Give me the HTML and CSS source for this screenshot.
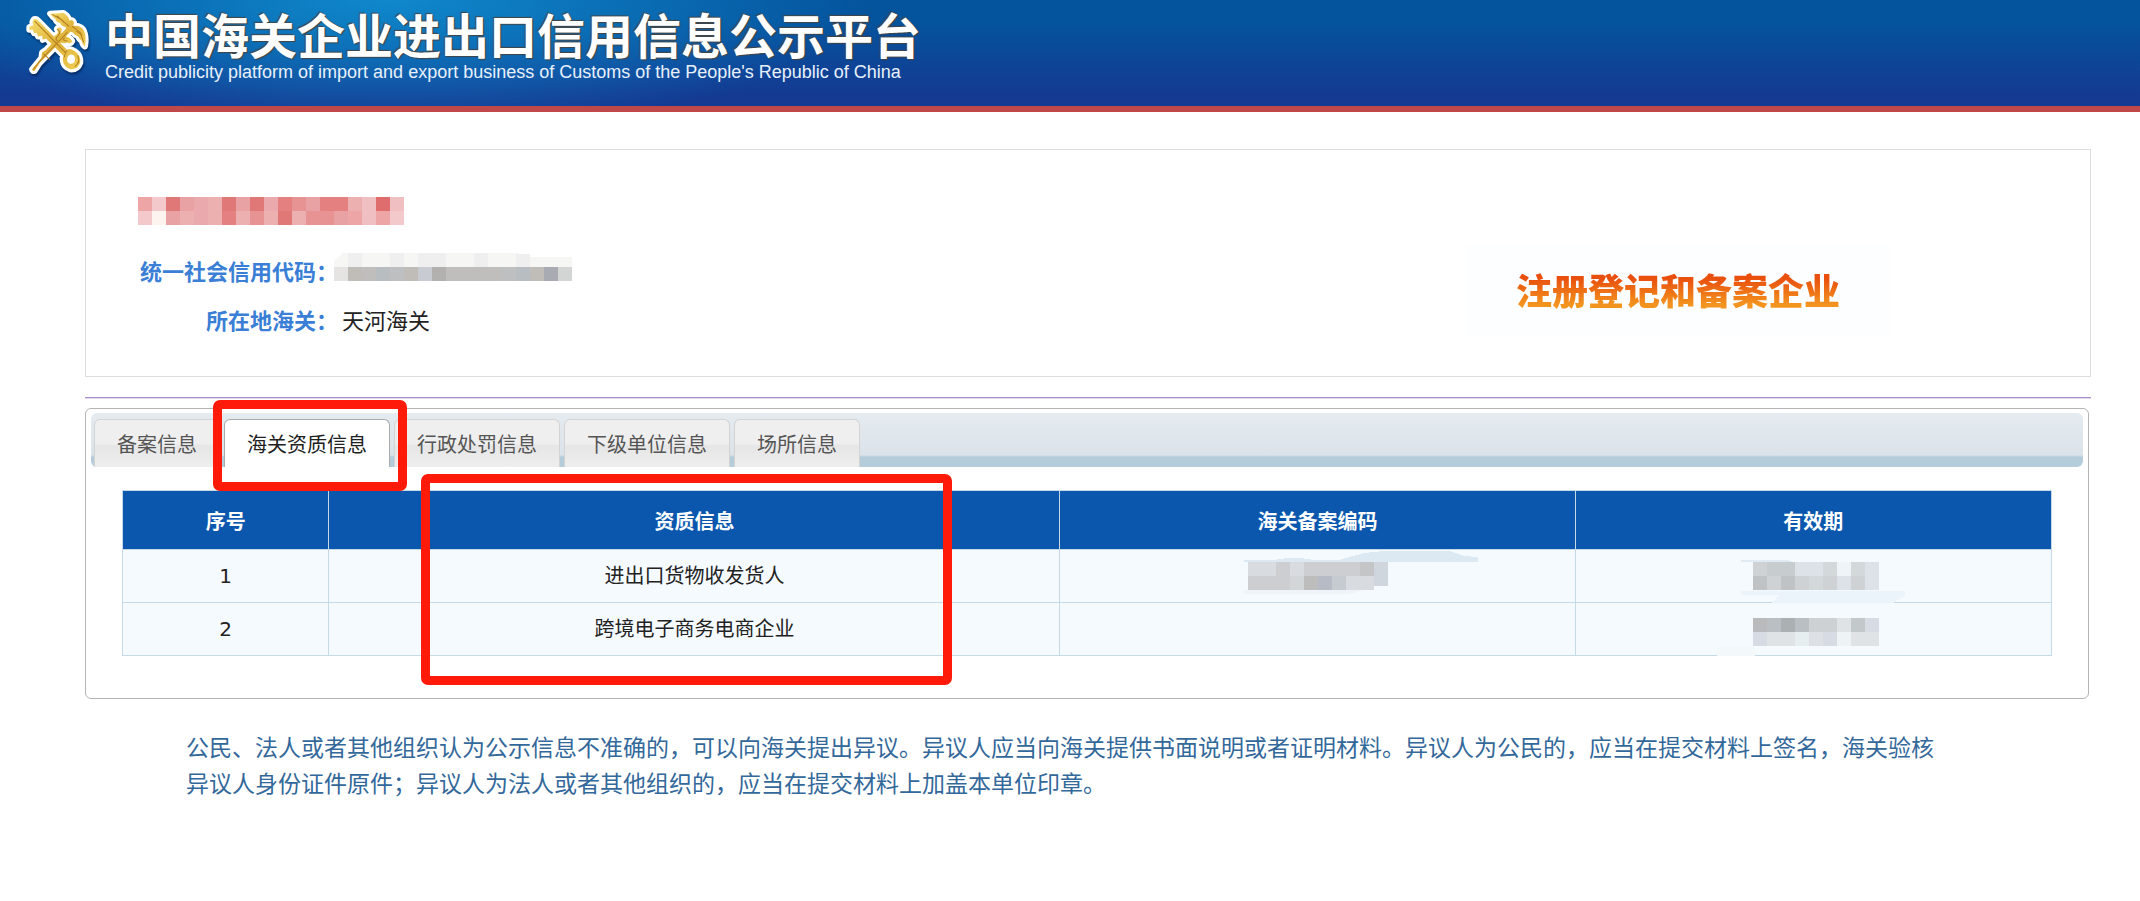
FILE: index.html
```html
<!DOCTYPE html>
<html lang="zh-CN">
<head>
    <meta charset="UTF-8">
    <meta name="viewport" content="width=device-width, initial-scale=1.0">
    <title>中国海关企业进出口信用信息公示平台</title>
    <link rel="stylesheet" href="styles.css">
</head>
<body>

<header class="header">
    <svg class="logo" viewBox="40 30 200 200" aria-hidden="true">
        <defs>
            <linearGradient id="gold" x1="0" y1="0" x2="1" y2="1">
                <stop offset="0" stop-color="#f6dc6c"/>
                <stop offset="0.5" stop-color="#e0b23a"/>
                <stop offset="1" stop-color="#f0cd52"/>
            </linearGradient>
            <g id="emblem">
                <path d="M118 44L158 42Q174 52 176 66Q180 60 187 66Q192 72 187 80Q206 78 216 90Q228 110 222 142Q214 136 212 124Q204 120 202 112Q192 108 186 100Q176 98 172 92Q166 94 164 84Q152 82 148 72Q136 70 134 60Q126 56 118 44Z"/>
                <path d="M170 84L182 94L86 192L72 214Q66 218 64 210L92 176L94 160L106 152Z"/>
                <path d="M70 60Q78 58 84 66L168 152Q176 146 192 156Q210 168 208 190Q200 212 178 210Q158 202 156 184Q154 176 158 170L106 118L96 122L94 110L82 112L78 102L70 102L66 92L56 92L56 84L68 78Q62 68 70 60ZM174 168Q166 176 170 188Q178 198 190 190Q196 178 188 168Q180 164 174 168Z" fill-rule="evenodd"/>
                <path d="M138 90Q142 82 150 86Q156 92 150 100Q158 106 166 112Q178 116 184 126Q180 136 170 130Q160 134 150 130Q142 140 130 126Q124 112 134 108Q146 102 138 90Z"/>
            </g>
        </defs>
        <use href="#emblem" fill="#fff" stroke="#fff" stroke-width="18" stroke-linejoin="round"/>
        <use href="#emblem" fill="url(#gold)"/>
        <g class="logo-lines">
            <path d="M72 66L164 160M124 46L152 62L174 82M184 82L208 100L218 130M196 96L214 108M138 50L160 70M68 210L92 180L170 100M98 164L118 182"/>
            <path d="M138 90Q152 96 142 110Q130 118 140 126M162 116Q150 124 170 126M168 154Q162 162 160 174M200 168Q210 188 192 202"/>
        </g>
        <path d="M176 170Q168 178 174 188Q180 194 188 188Q194 178 186 170Q180 166 176 170Z" fill="#fff"/>
    </svg>
    <div class="brand">
        <h1 class="brand-name">中国海关企业进出口信用信息公示平台</h1>
        <p class="brand-sub">Credit publicity platform of import and export business of Customs of the People's Republic of China</p>
    </div>
</header>

<main class="content">
    <section class="company">
        <div class="company-info">
            <svg class="mosaic company-name" width="266" height="28" viewBox="0 0 19 2" role="img" aria-label="企业名称">
                <path fill="#eea5a5" d="M0 0h1v1h-1zM17 1h1v1h-1zM15 1h1v1h-1z"/>
                <path fill="#f3c9cb" d="M1 0h1v1h-1zM0 1h1v1h-1zM18 1h1v1h-1z"/>
                <path fill="#fdf4f0" d="M1 1h1v1h-1z"/>
                <path fill="#e07878" d="M2 0h1v1h-1zM6 0h1v1h-1zM8 0h1v1h-1zM10 1h1v1h-1z"/>
                <path fill="#e9a2a3" d="M3 0h1v1h-1zM7 0h1v1h-1zM2 1h1v1h-1zM12 0h1v1h-1zM14 1h1v1h-1z"/>
                <path fill="#eaa9ac" d="M4 0h1v1h-1zM9 0h1v1h-1zM4 1h1v1h-1z"/>
                <path fill="#edb0b0" d="M5 0h1v1h-1zM3 1h1v1h-1zM5 1h1v1h-1zM7 1h1v1h-1zM9 1h1v1h-1zM11 1h1v1h-1zM15 0h1v1h-1z"/>
                <path fill="#e48080" d="M6 1h1v1h-1zM10 0h1v1h-1zM13 0h1v1h-1zM14 0h1v1h-1z"/>
                <path fill="#e89393" d="M8 1h1v1h-1zM11 0h1v1h-1zM12 1h1v1h-1zM13 1h1v1h-1z"/>
                <path fill="#efbfc2" d="M16 0h1v2h-1zM18 0h1v1h-1z"/>
                <path fill="#e06d6d" d="M17 0h1v1h-1z"/>
            </svg>
            <dl class="company-list">
                <dt>统一社会信用代码：</dt>
                <dd>
                    <svg class="mosaic credit-code" width="238" height="28" viewBox="0 0 17 2" role="img" aria-label="统一社会信用代码">
                        <path fill="#f6f6f5" d="M0 1L0 .6L.6 0H13L14 .3H17V1z"/>
                        <path fill="#efefef" d="M1 0h1v1h-1zM4 0h1v1h-1zM6 0h2v1h-2zM10 0h1v1h-1zM13 .1h1v.9h-1z"/>
                        <path fill="#e5e4e3" d="M0 1h1v1h-1z"/>
                        <path fill="#c0bcb8" d="M1 1h1v1h-1zM5 1h1v1h-1zM14 1h1v1h-1z"/>
                        <path fill="#bfbebd" d="M2 1h1v1h-1zM8 1h4v1h-4z"/>
                        <path fill="#b8bdc1" d="M3 1h1v1h-1zM13 1h1v1h-1z"/>
                        <path fill="#bdbfc1" d="M4 1h1v1h-1zM12 1h1v1h-1z"/>
                        <path fill="#c8ccd2" d="M6 1h1v1h-1z"/>
                        <path fill="#b2b1b0" d="M7 1h1v1h-1z"/>
                        <path fill="#a8acb2" d="M15 1h1v1h-1z"/>
                        <path fill="#d3d5d4" d="M16 1h1v1h-1z"/>
                    </svg>
                </dd>
                <dt>所在地海关：</dt>
                <dd>天河海关</dd>
            </dl>
        </div>
        <div class="company-type"><span>注册登记和备案企业</span></div>
    </section>

    <hr class="divider">

    <section class="tabs">
        <div class="tab-bar" role="tablist">
            <button class="tab" type="button" role="tab">备案信息</button>
            <button class="tab active" type="button" role="tab" aria-selected="true">海关资质信息<span class="mark mark-tab"></span></button>
            <button class="tab" type="button" role="tab">行政处罚信息</button>
            <button class="tab" type="button" role="tab">下级单位信息</button>
            <button class="tab" type="button" role="tab">场所信息</button>
        </div>
        <div class="tab-panel" role="tabpanel">
            <table class="info-table">
                <colgroup>
                    <col class="col-no">
                    <col class="col-info">
                    <col class="col-code">
                    <col class="col-date">
                </colgroup>
                <thead>
                    <tr>
                        <th>序号</th>
                        <th>资质信息</th>
                        <th>海关备案编码</th>
                        <th>有效期</th>
                    </tr>
                </thead>
                <tbody>
                    <tr>
                        <td>1</td>
                        <td>进出口货物收发货人</td>
                        <td>
                            <svg class="mosaic" width="146" height="48" viewBox="0 4 146 48" role="img" aria-label="海关备案编码">
                                <path fill="#dce8f2" d="M0 12H30Q50 8 70 12H95L120 5L140 3H205L220 8L234 9V14H0z"/>
                                <path fill="#eef4f9" d="M0 42H120L105 46H0z"/>
                                <path fill="#d8dce0" d="M4 14h28v14h-28zM46 14h14v14h-14zM102 28h28v14h-28z"/>
                                <path fill="#ccced2" d="M32 14h14v14h-14zM4 28h42v14h-42zM60 14h42v14h-42zM102 14h14v14h-14z"/>
                                <path fill="#d3d6d9" d="M46 28h14v14h-14z"/>
                                <path fill="#bdbdbe" d="M60 28h14v14h-14z"/>
                                <path fill="#b6bbc5" d="M74 28h14v14h-14z"/>
                                <path fill="#c6cad1" d="M88 28h14v14h-14z"/>
                                <path fill="#c3c5c6" d="M116 14h14v14h-14z"/>
                                <path fill="#cfd6de" d="M130 14h14v24h-14z"/>
                            </svg>
                        </td>
                        <td>
                            <svg class="mosaic" width="160" height="48" viewBox="0 2 160 48" role="img" aria-label="有效期">
                                <path fill="#dfeaf3" d="M8 10H54L60 12H8z"/>
                                <path fill="#ecf4fb" d="M8 41H172V46L160 53H38L46 45H8z"/>
                                <path fill="#ced2d5" d="M20 12h14v14h-14zM34 26h14v14h-14zM62 26h14v14h-14zM90 26h14v14h-14zM118 26h14v14h-14z"/>
                                <path fill="#c7cccf" d="M34 12h28v14h-28z"/>
                                <path fill="#dde2e9" d="M62 12h28v14h-28zM104 26h14v14h-14zM132 12h14v28h-14z"/>
                                <path fill="#d3d8db" d="M90 12h14v14h-14zM118 12h14v14h-14zM76 26h14v14h-14z"/>
                                <path fill="#eef4f8" d="M104 12h14v14h-14z"/>
                                <path fill="#bfc3c6" d="M20 26h14v14h-14zM48 26h14v14h-14z"/>
                            </svg>
                        </td>
                    </tr>
                    <tr>
                        <td>2</td>
                        <td>跨境电子商务电商企业</td>
                        <td></td>
                        <td>
                            <svg class="mosaic" width="160" height="48" viewBox="0 2 160 48" role="img" aria-label="有效期">
                                <path fill="#f3f8fb" d="M-16 44H22V53H-16z"/>
                                <path fill="#b9babc" d="M20 15h14v14h-14z"/>
                                <path fill="#babfc3" d="M34 15h14v14h-14zM62 15h14v14h-14z"/>
                                <path fill="#abb0b3" d="M48 15h14v14h-14z"/>
                                <path fill="#cdd1d4" d="M76 15h28v14h-28z"/>
                                <path fill="#dfe3e6" d="M104 15h14v14h-14zM34 29h28v14h-28zM118 29h28v14h-28z"/>
                                <path fill="#c3c8cb" d="M118 15h14v14h-14z"/>
                                <path fill="#d7dce4" d="M132 15h14v14h-14zM20 29h14v14h-14zM90 29h14v14h-14z"/>
                                <path fill="#e6eef0" d="M62 29h14v14h-14z"/>
                                <path fill="#dde0e5" d="M76 29h14v14h-14z"/>
                                <path fill="#eef3f6" d="M104 29h14v14h-14z"/>
                            </svg>
                        </td>
                    </tr>
                </tbody>
            </table>
            <span class="mark mark-column"></span>
        </div>
    </section>

    <p class="notice">公民、法人或者其他组织认为公示信息不准确的，可以向海关提出异议。异议人应当向海关提供书面说明或者证明材料。异议人为公民的，应当在提交材料上签名，海关验核异议人身份证件原件；异议人为法人或者其他组织的，应当在提交材料上加盖本单位印章。</p>
</main>

</body>
</html>
```
FILE: styles.css
```css
* {
    box-sizing: border-box;
}
body {
    margin: 0;
    background: #fff;
    color: #222;
    font-family: "Noto Sans CJK SC", sans-serif;
    font-size: 20px;
}
h1, p, dl, dd {
    margin: 0;
}
.mosaic {
    display: block;
    overflow: visible;
    shape-rendering: crispEdges;
}

/* header */
.header {
    display: flex;
    align-items: flex-start;
    gap: 14px;
    height: 112px;
    padding: 9px 24px 0;
    border-bottom: 6px solid #c04848;
    background:
        radial-gradient(ellipse 480px 130px at 390px 0, #1088cc, rgba(16, 136, 204, 0)),
        linear-gradient(#04539d 20%, #143a92 90%);
}
.logo {
    width: 67px;
    height: 67px;
    filter: drop-shadow(1px 2px 1px rgba(0, 20, 60, 0.6));
}
.logo-lines {
    fill: none;
    stroke: #b07c1e;
    stroke-width: 3;
}
.brand {
    color: #fff;
}
.brand-name {
    font-size: 48px;
    line-height: 48px;
    font-weight: bold;
    text-shadow: -1px -1px 1px #444, 1px 1px 1px #444;
}
.brand-sub {
    font-family: "Liberation Sans", Arial, sans-serif;
    font-size: 18px;
    line-height: 30px;
    color: #e8f1fb;
}

/* company card */
.content {
    padding: 37px 49px 0 85px;
}
.company {
    display: flex;
    justify-content: space-between;
    align-items: flex-start;
    height: 228px;
    padding: 47px 200px 0 52px;
    border: 1px solid #ddd;
}
.company-list {
    display: grid;
    grid-template-columns: 200px auto;
    column-gap: 4px;
    margin-top: 21px;
    font-size: 22px;
    line-height: 49px;
}
.company-list dt {
    color: #3a7fd5;
    font-weight: bold;
    text-align: right;
}
.credit-code {
    margin: 7px 0 0 -8px;
}
.company-type {
    margin-top: 48px;
    padding: 18px 50px 22px;
    background: #fcfeff;
    font-size: 36px;
    line-height: 52px;
    font-weight: 900;
}
.company-type span {
    background: linear-gradient(#e9500e 30%, #f3941f 80%);
    -webkit-background-clip: text;
    background-clip: text;
    color: transparent;
}
.divider {
    height: 2px;
    margin: 20px 0 9px;
    border: 0;
    border-top: 1px solid #a78fcb;
    background: #e2daee;
}

/* tabs */
.tabs {
    margin-right: 2px;
    padding: 4px 5px 42px;
    border: 1px solid #b4b4b4;
    border-radius: 6px;
}
.tab-bar {
    display: flex;
    gap: 4px;
    height: 54px;
    padding: 6px 3px 0;
    border-radius: 6px;
    background: linear-gradient(#e5ebef, #dbe3ea 42px, #b5ccda 44px);
}
.tab {
    position: relative;
    padding: 0 22px;
    border: 1px solid #d3d3d3;
    border-bottom: 0;
    border-radius: 6px 6px 0 0;
    background: linear-gradient(#efefef 50%, #e6e6e6 55%, #eee);
    color: #555;
    font-family: inherit;
    font-size: 20px;
    cursor: pointer;
}
.tab.active {
    border-color: #aaa;
    background: #fff;
    color: #212121;
}
.tab-panel {
    position: relative;
    margin: 23px 31px 0;
}

/* red highlight frames */
.mark {
    position: absolute;
    border: 9px solid #ff1a0a;
    border-radius: 7px;
    pointer-events: none;
    z-index: 1;
}
.mark-tab {
    inset: -20px -18px -24px -12px;
}
.mark-column {
    top: -16px;
    bottom: -29px;
    left: 15.5%;
    width: 27.5%;
}

/* table */
.info-table {
    width: 100%;
    table-layout: fixed;
    border-collapse: collapse;
    text-align: center;
}
.col-no {
    width: 10.7%;
}
.col-info {
    width: 37.9%;
}
.col-code {
    width: 26.7%;
}
.info-table th, .info-table td {
    padding: 0;
    border: 1px solid #c5d9e6;
}
.info-table th {
    height: 59px;
    background: #0b57ae;
    color: #fff;
}
.info-table td {
    height: 53px;
    background: #f5faff;
    font-family: "DejaVu Sans", "Noto Sans CJK SC", sans-serif;
    line-height: 24px;
}
.info-table .mosaic {
    margin: 0 auto;
}

.notice {
    padding: 29px 145px 0 101px;
    color: #33689a;
    font-size: 23px;
    line-height: 36px;
}
```
